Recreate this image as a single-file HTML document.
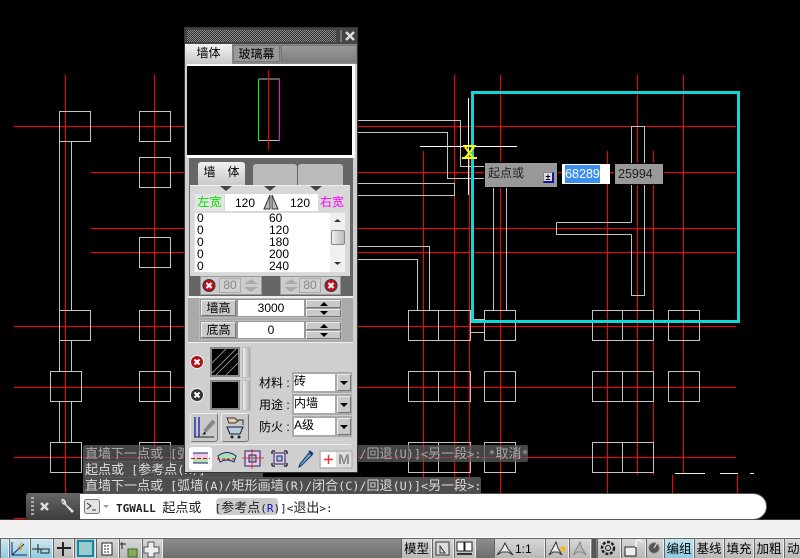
<!DOCTYPE html>
<html><head><meta charset="utf-8"><style>
*{box-sizing:border-box}
html,body{margin:0;padding:0;background:#000}
#r{position:relative;width:800px;height:558px;overflow:hidden;background:#000;font-family:"Liberation Sans","WenQuanYi Zen Hei",sans-serif;font-size:12px;color:#000}
#r div,#r span.a,#r svg.a{position:absolute}
.m{font-family:"DejaVu Sans Mono","WenQuanYi Zen Hei",monospace;font-size:11.800px;white-space:pre;line-height:16px}
.m i{font-style:normal;font-family:"WenQuanYi Zen Hei","Noto Sans CJK SC",sans-serif;font-size:13px}
.h{background:rgba(92,92,92,.85);color:#ddd;height:17px;padding-left:2px;border-radius:2px}
.t{white-space:pre;text-align:center}
.b{background:#c9c9c9;border:1px solid #eee;border-right-color:#777;border-bottom-color:#777}
.st{top:539px;height:19px;background:linear-gradient(#d8d8d8,#b8b8b8);border-left:1px solid #666;border-right:1px solid #eee;text-align:center;font-size:12.500px;line-height:20px}
</style></head><body><div id="r">

<svg class="a" style="left:0;top:0" width="800" height="558" shape-rendering="crispEdges" fill="none">
<path stroke="#f00" d="M14 126.500H736M91 172.500H736M91 228.500H736M91 252.500H736M14 326.500H736M14 387.500H736M14 457.500H736M14 518.500H26M65.500 75V519M154.500 75V519M423.500 151V519M454.500 75V519M469.500 151V519M500.500 75V519M607.500 151V519M637.500 75V475M653.500 151V475M683.500 75V473M672.500 475V493M737.500 475V493"/>
<path stroke="#c4c4c4" d="M59.500 111.500h31v30h-31zM139.500 111.500h31v30h-31zM139.500 157.500h31v30h-31zM139.500 237.500h31v30h-31zM59.500 310.500h31v30h-31zM139.500 310.500h31v30h-31zM50.500 371.500h31v30h-31zM139.500 371.500h31v30h-31zM50.500 442.500h31v30h-31zM139.500 442.500h31v30h-31z
M59.500 141V310M71.500 141V310M59.500 341V371M71.500 341V371M59.500 402V442M71.500 402V442
M408.500 310.500h62v30h-62zM438.500 310V341M484.500 310.500h31v30h-31zM408.500 371.500h62v30h-62zM438.500 371V402M484.500 371.500h31v30h-31zM408.500 442.500h62v30h-62zM438.500 442V473M484.500 442.500h31v30h-31z
M592.500 310.500h61v30h-61zM622.500 310V341M668.500 310.500h31v30h-31zM592.500 371.500h61v30h-61zM622.500 371V402M668.500 371.500h31v30h-31zM592.500 442.500h61v30h-61zM622.500 442V473
M355 120.500H460.500V166.500H485M355 132.500H447.500V178.500H485M355 183.500H454.500V195.500H355M355 246.500H429.500V310M355 259.500H417.500V310M493.500 187V310M506.500 187V310
M631.500 222.500V126.500H644.500V296M631.500 234.500V295.500H644.500M556.500 222.500H631.500M556.500 222.500V234.500H631.500M470 319.500H484M470 332.500H484"/>
<path stroke="#eee" d="M720 473.500h18M750 473.500h4M675 473.500h30"/>
<rect x="472.500" y="92.500" width="266" height="229" stroke="#12d6d6" stroke-width="3"/>
<path stroke="#fff" d="M468.500 98V195M420 146.500H517"/>
<path stroke="#ff0" stroke-width="2" d="M463 146h13M465 147l8 11M474 147l-9 11M462 158h15"/>
</svg>

<div style="left:485px;top:163px;width:72px;height:24px;background:#999;outline:1px solid #000"></div>
<div class="t" style="left:488px;top:165px;font-size:12px;color:#222;line-height:16px">起点或</div>
<div style="left:543px;top:172px;width:11px;height:11px;background:#ddd;border:1px solid #888;border-right:2px solid #11a;border-bottom:2px solid #11a;font-size:9px;font-weight:bold;line-height:8px;text-align:center">±</div>
<div style="left:562px;top:164px;width:48px;height:20px;background:#fff"></div>
<div style="left:565px;top:165px;width:35px;height:18px;background:#3b8ef0;color:#fff;font-size:12.500px;line-height:18px;text-align:center">68289</div>
<div style="left:615px;top:164px;width:48px;height:20px;background:#999;color:#222;font-size:12.500px;line-height:20px;padding-left:3px;outline:1px solid #000">25994</div>

<!-- Command history -->
<div class="m h" style="left:83px;top:445px;width:445px;color:#aaa;background:rgba(92,92,92,.75)"><i>直墙下一点或</i> [<i>弧墙</i>(A)/<i>矩形画墙</i>(R)/<i>闭合</i>(C)/<i>回退</i>(U)]&lt;<i>另一段</i>&gt;: *<i>取消</i>*</div>
<div class="m h" style="left:83px;top:461px;width:180px"><i>起点或</i> [<i>参考点</i>(R)]</div>
<div class="m h" style="left:83px;top:477px;width:398px"><i>直墙下一点或</i> [<i>弧墙</i>(A)/<i>矩形画墙</i>(R)/<i>闭合</i>(C)/<i>回退</i>(U)]&lt;<i>另一段</i>&gt;:</div>

<!-- Command line -->
<div style="left:0;top:519px;width:800px;height:1px;background:#333"></div>
<div style="left:26px;top:493px;width:741px;height:27px;background:#fff;border:1px solid #555;border-radius:3px 14px 14px 3px / 3px 13px 13px 3px"></div>
<div style="left:26px;top:493px;width:54px;height:27px;background:linear-gradient(#666,#3c3c3c);border-radius:3px 0 0 3px"></div>
<svg class="a" style="left:26px;top:493px" width="54" height="27">
<path d="M5 5h3M5 9h3M5 13h3M5 17h3M5 21h3" stroke="#aaa" stroke-width="2"/>
<path d="M15 10l7 7M22 10l-7 7" stroke="#ddd" stroke-width="2.500"/>
<path d="M36 6a4 4 0 0 0 3 6l7 8 2-2-8-7a4 4 0 0 0-5-5l3 3-1 1z" fill="#ddd"/>
</svg>
<svg class="a" style="left:84px;top:497px" width="26" height="20">
<rect x=".5" y="2.500" width="15" height="14" rx="2" fill="#e4e4e4" stroke="#777"/>
<path d="M3 6l4 3-4 3M8 13h4" stroke="#333" fill="none"/>
<path d="M19 8h6l-3 3z" fill="#999"/>
</svg>
<div style="left:216px;top:498px;width:62px;height:17px;background:#ccc;border-radius:4px"></div>
<div class="m" style="left:116px;top:498px;font-size:11px;font-weight:bold;color:#222;line-height:17px">TGWALL <i style="font-weight:normal">起点或</i> <span style="font-weight:normal"> [<i>参考点</i>(<span style="color:#11d">R</span>)]&lt;<i>退出</i>&gt;:</span></div>

<!-- Light band + status bar -->
<div style="left:0;top:520px;width:800px;height:18px;background:#f0f0f0"></div>
<div style="left:0;top:537px;width:800px;height:1px;background:#fff"></div>
<div style="left:0;top:538px;width:800px;height:20px;background:linear-gradient(#8e8e8e,#6e6e6e);border-top:1px solid #666"></div>
<div class="st" style="left:0;width:9px;background:linear-gradient(#d0e8f0,#8ccbe0)"></div>
<div class="st" style="left:9px;width:21px;background:linear-gradient(#d0e8f0,#8ccbe0)"></div>
<div class="st" style="left:30px;width:23px;background:linear-gradient(#d0e8f0,#8ccbe0)"></div>
<div class="st" style="left:53px;width:21px"></div>
<div class="st" style="left:74px;width:22px;background:#ccc"></div>
<div class="st" style="left:96px;width:23px"></div>
<div class="st" style="left:119px;width:23px"></div>
<div class="st" style="left:142px;width:21px"></div>
<div class="st" style="left:401px;width:31px">模型</div>
<div class="st" style="left:432px;width:22px"></div>
<div class="st" style="left:454px;width:22px"></div>
<div class="st" style="left:494px;width:51px;text-align:left;padding-left:20px;font-size:12px">1:1 ▼</div>
<div class="st" style="left:545px;width:24px"></div>
<div class="st" style="left:569px;width:22px"></div>
<div style="left:592px;top:539px;width:4px;height:19px;background:#555"></div>
<div class="st" style="left:597px;width:24px"></div>
<div class="st" style="left:621px;width:25px"></div>
<div class="st" style="left:646px;width:18px"></div>
<div class="st" style="left:664px;width:30px;background:linear-gradient(#c4e4f0,#8ccbe0)">编组</div>
<div class="st" style="left:694px;width:30px">基线</div>
<div class="st" style="left:724px;width:30px">填充</div>
<div class="st" style="left:754px;width:30px">加粗</div>
<div class="st" style="left:784px;width:30px;text-align:left;padding-left:2px">动态</div>
<svg class="a" style="left:0;top:539px" width="800" height="19" fill="none" stroke="#222">
<path d="M12 3V16H27M12 16L24 5" stroke="#226"/><path d="M22 3l-3 5h3l-2 4" stroke="#e90"/>
<path d="M32 10h13M38 5v9M41 10h8v4h-8z"/>
<path d="M57 9h14M63 3v14" stroke-width="2"/>
<rect x="78" y="2" width="15" height="15" fill="#9cc" stroke="#18a" stroke-width="2"/>
<rect x="102" y="4" width="10" height="12" fill="#fff"/><path d="M104 7h6M104 10h6M104 13h6" stroke-dasharray="2 1"/>
<path d="M122 3v7M120 5h6"/><rect x="128" y="10" width="9" height="8" fill="#8a5" stroke="#363"/>
<path d="M148 3h6v5h5v6h-5v4h-6v-4h-4V8h4z" fill="#eee" stroke="#555"/>
<path d="M436 3h13v13h-13zM440 7l5 7h-5z" stroke="#333" fill="#ddd"/>
<rect x="457" y="3" width="7" height="9" fill="#fff"/><rect x="465" y="3" width="7" height="9" fill="#fff"/><path d="M457 15h15" stroke-width="2" stroke="#333"/>
<path d="M505 4l-3 6-5 6 5-3h6l5 3-5-6z" fill="#eee" stroke="#333"/>
<path d="M556 3l-3 6-4 7 4-3h5l4 3-4-7z" fill="#eee" stroke="#333"/><circle cx="563" cy="10" r="2.500" fill="#fb0" stroke="none"/>
<path d="M580 3l-3 6-4 7 4-3h5l4 3-4-7z" fill="#bbb" stroke="#888"/>
<circle cx="608" cy="9" r="6" stroke-width="2.500" stroke-dasharray="3 1.500"/><circle cx="608" cy="9" r="2.500"/>
<rect x="625" y="8" width="11" height="9" fill="#eee"/><path d="M636 8V4a3 3 0 0 1 6 0" stroke="#eee" stroke-width="2"/>
<circle cx="654" cy="9" r="5.500" fill="#555" stroke="#aaa"/><path d="M654 9l3-5" stroke="#eee"/>
</svg>

<!-- Panel -->
<div style="left:184px;top:27px;width:174px;height:446px;background:#cfcfcf;border:1px solid #333"></div>
<div style="left:185px;top:28px;width:172px;height:16px;background:#444"></div>
<div style="left:187px;top:30px;width:149px;height:12px;background:repeating-conic-gradient(#8a8a8a 0 25%,#333 0 50%) 0 0/2px 2px"></div>
<div style="left:340px;top:30px;width:2px;height:12px;background:#777"></div>
<svg class="a" style="left:344px;top:30px" width="12" height="12"><path d="M2 2l8 8M10 2l-8 8" stroke="#ddd" stroke-width="2.500"/></svg>
<div style="left:185px;top:44px;width:172px;height:20px;background:#888"></div>
<div class="t" style="left:185px;top:44px;width:47px;height:20px;background:linear-gradient(#f4f4f4,#c8c8c8);line-height:19px;font-size:12px">墙体</div>
<div class="t" style="left:233px;top:45px;width:47px;height:17px;background:#999;line-height:16px;font-size:12px;border:1px solid #777">玻璃幕</div>
<div style="left:281px;top:45px;width:76px;height:17px;background:linear-gradient(#999,#808080);border:1px solid #777"></div>
<div style="left:187px;top:64px;width:168px;height:94px;background:#fff"></div>
<div style="left:187px;top:66px;width:165px;height:89px;background:#000"></div>
<svg class="a" style="left:187px;top:66px" width="165" height="89" shape-rendering="crispEdges" fill="none">
<path d="M71.500 13h21" stroke="#bbb"/><path d="M71.500 74.500h21" stroke="#bbb"/>
<path d="M71.500 13v62" stroke="#0f0"/><path d="M92.500 13v62" stroke="#f0f"/><path d="M81.500 4v80" stroke="#f00"/>
</svg>

<div style="left:189px;top:158px;width:164px;height:139px;background:#666"></div>
<div class="t" style="left:198px;top:162px;width:47px;height:24px;background:linear-gradient(#f0f0f0,#c8c8c8);border-radius:3px 3px 0 0;line-height:21px;font-size:12px">墙　体</div>
<div style="left:253px;top:164px;width:44px;height:22px;background:#bbb;border-radius:3px 3px 0 0"></div>
<div style="left:298px;top:164px;width:45px;height:22px;background:#bbb;border-radius:3px 3px 0 0"></div>
<div style="left:190px;top:185px;width:160px;height:91px;background:#d8d8d8;border-top:1px solid #eee"></div>
<svg class="a" style="left:190px;top:185px" width="160" height="9"><path d="M30 1h12l-6 5zM74 1h12l-6 5zM120 1h12l-6 5z" fill="#444"/></svg>
<div class="t" style="left:195px;top:194px;width:29px;height:17px;background:#e4e4e4;color:#0d0;font-size:12px;line-height:17px">左宽</div>
<div style="left:225px;top:194px;width:93px;height:17px;background:#fff"></div>
<div class="t" style="left:235px;top:196px;font-size:12px;line-height:14px">120</div>
<div class="t" style="left:290px;top:196px;font-size:12px;line-height:14px">120</div>
<svg class="a" style="left:263px;top:193px" width="16" height="18"><path d="M7 2L1 16h6zM9 2l6 14H9z" fill="#bbb" stroke="#333"/></svg>
<div class="t" style="left:319px;top:194px;width:26px;height:17px;color:#f0f;font-size:12px;line-height:17px">右宽</div>
<div style="left:194px;top:212px;width:152px;height:61px;background:#fff;border:1px solid #ddd"></div>
<div class="t" style="left:197px;top:212px;font-size:12px;line-height:12px;text-align:left">0
0
0
0
0</div>
<div class="t" style="left:269px;top:212px;font-size:12px;line-height:12px;text-align:left">60
120
180
200
240</div>
<div style="left:330px;top:213px;width:15px;height:59px;background:#f0f0f0"></div>
<div style="left:331px;top:230px;width:14px;height:15px;background:linear-gradient(90deg,#eee,#bbb);border:1px solid #888;border-radius:2px"></div>
<svg class="a" style="left:330px;top:213px" width="15" height="59"><path d="M4 9h7l-3.500-3zM4 49h7l-3.500 3z" fill="#333"/></svg>

<div style="left:200px;top:276px;width:62px;height:19px;background:#ccc;border:1px solid #999"></div>
<div style="left:280px;top:276px;width:61px;height:19px;background:#ccc;border:1px solid #999"></div>
<div class="t" style="left:219px;top:278px;width:22px;height:15px;background:#d0d0d0;border:1px solid #aaa;color:#888;line-height:13px">80</div>
<div class="t" style="left:299px;top:278px;width:22px;height:15px;background:#d0d0d0;border:1px solid #aaa;color:#888;line-height:13px">80</div>
<svg class="a" style="left:200px;top:276px" width="141" height="19">
<circle cx="9" cy="9.500" r="6" fill="#c01020" stroke="#333"/><path d="M6.500 7l5 5M11.500 7l-5 5" stroke="#fff" stroke-width="2"/>
<circle cx="131" cy="9.500" r="6" fill="#c01020" stroke="#333"/><path d="M128.500 7l5 5M133.500 7l-5 5" stroke="#fff" stroke-width="2"/>
<path d="M44 8h14l-7-5zM44 11h14l-7 5zM84 8h14l-7-5zM84 11h14l-7 5z" fill="#aaa"/>
</svg>

<div style="left:188px;top:296px;width:165px;height:2px;background:#eee"></div>
<div style="left:188px;top:298px;width:165px;height:44px;background:#aaa"></div>
<div style="left:199px;top:298px;width:143px;height:20px;background:#999;border:1px solid #bbb"></div>
<div style="left:199px;top:320px;width:143px;height:20px;background:#999;border:1px solid #bbb"></div>
<div class="t b" style="left:201px;top:300px;width:35px;height:16px;font-size:12px;line-height:15px">墙高</div>
<div class="t b" style="left:201px;top:322px;width:35px;height:16px;font-size:12px;line-height:15px">底高</div>
<div class="t" style="left:238px;top:300px;width:66px;height:16px;background:#fff;line-height:16px">3000</div>
<div class="t" style="left:238px;top:322px;width:66px;height:16px;background:#fff;line-height:16px">0</div>
<div class="b" style="left:306px;top:300px;width:35px;height:8px"></div>
<div class="b" style="left:306px;top:309px;width:35px;height:8px"></div>
<div class="b" style="left:306px;top:322px;width:35px;height:8px"></div>
<div class="b" style="left:306px;top:331px;width:35px;height:8px"></div>
<svg class="a" style="left:306px;top:300px" width="35" height="40"><path d="M14 6h8l-4-4zM14 11h8l-4 4zM14 28h8l-4-4zM14 33h8l-4 4z" fill="#000"/></svg>

<div style="left:188px;top:342px;width:165px;height:1px;background:#eee"></div>
<div style="left:210px;top:347px;width:30px;height:30px;background:#000;border:2px solid #888"></div>
<div style="left:210px;top:380px;width:30px;height:30px;background:#000;border:2px solid #888"></div>
<svg class="a" style="left:212px;top:349px" width="26" height="26"><path d="M0 14L14 0M4 26L26 4M14 26L26 14M0 24L24 0" stroke="#888"/></svg>
<div style="left:242px;top:347px;width:9px;height:31px;background:linear-gradient(90deg,#eee,#aaa);border:1px solid #bbb"></div>
<div style="left:242px;top:380px;width:9px;height:31px;background:linear-gradient(90deg,#eee,#aaa);border:1px solid #bbb"></div>
<svg class="a" style="left:188px;top:352px" width="20" height="52">
<circle cx="9" cy="10" r="6.500" fill="#b01018" stroke="#eee"/><path d="M6.500 7.500l5 5M11.500 7.500l-5 5" stroke="#fff" stroke-width="2"/>
<circle cx="9" cy="43" r="6.500" fill="#333" stroke="#eee"/><path d="M6.500 40.500l5 5M11.500 40.500l-5 5" stroke="#fff" stroke-width="2"/>
</svg>
<div class="t" style="left:259px;top:376px;font-size:12px;line-height:15px">材料 :</div>
<div class="t" style="left:259px;top:398px;font-size:12px;line-height:15px">用途 :</div>
<div class="t" style="left:259px;top:420px;font-size:12px;line-height:15px">防火 :</div>
<div style="left:292px;top:372px;width:60px;height:21px;background:#aaa"></div>
<div style="left:292px;top:394px;width:60px;height:21px;background:#aaa"></div>
<div style="left:292px;top:416px;width:60px;height:21px;background:#aaa"></div>
<div class="t" style="left:294px;top:374px;width:41px;height:17px;background:#fff;text-align:left;font-size:12px;line-height:15px">砖</div>
<div class="t" style="left:294px;top:396px;width:41px;height:17px;background:#fff;text-align:left;font-size:12px;line-height:15px">内墙</div>
<div class="t" style="left:294px;top:418px;width:41px;height:17px;background:#fff;text-align:left;font-size:12px;line-height:15px">A级</div>
<div class="b" style="left:337px;top:374px;width:14px;height:17px"></div>
<div class="b" style="left:337px;top:396px;width:14px;height:17px"></div>
<div class="b" style="left:337px;top:418px;width:14px;height:17px"></div>
<svg class="a" style="left:337px;top:374px" width="14" height="61"><path d="M3 7h8l-4 4zM3 29h8l-4 4zM3 51h8l-4 4z" fill="#000"/></svg>

<div class="b" style="left:190px;top:413px;width:28px;height:29px;border-radius:3px"></div>
<div class="b" style="left:221px;top:413px;width:28px;height:29px;border-radius:3px"></div>
<svg class="a" style="left:190px;top:413px" width="60" height="29" fill="none">
<path d="M5 4v20M9 4v20" stroke="#23a" stroke-width="1.500"/><path d="M4 24h20" stroke="#222"/>
<path d="M24 8l-9 10" stroke="#888" stroke-width="4"/><path d="M15 18l-3 4 4-1z" fill="#222"/>
<path d="M37 5h8l3 3-3 2h-6z" fill="#e8c8a8" stroke="#333"/><path d="M48 7h5v5" stroke="#333"/>
<path d="M37 14h16l-3 7H40z" fill="#bcd" stroke="#123"/><circle cx="42" cy="24" r="1.500" fill="#222"/><circle cx="49" cy="24" r="1.500" fill="#222"/>
</svg>
<div style="left:190px;top:444px;width:161px;height:1px;background:#eee"></div>
<div style="left:189px;top:447px;width:23px;height:23px;background:#fff;border-radius:3px"></div>
<svg class="a" style="left:189px;top:447px" width="165" height="24" fill="none">
<rect x="4" y="6" width="15" height="5" fill="#ecc8ec"/><rect x="4" y="11" width="15" height="5" fill="#a8e4b8"/>
<path d="M4 6h15M4 16h15" stroke="#226"/><path d="M2 11.500h19" stroke="#e00" stroke-dasharray="4 2"/>
<path d="M29 9q9-7 18 0l-2 6q-7-4-14 0z" fill="#a8e4b8" stroke="#226"/><path d="M28 12h20" stroke="#e00" stroke-dasharray="3 2"/>
<rect x="56" y="4" width="15" height="15" fill="#eccce4" stroke="#226"/><rect x="60" y="8" width="7" height="7" fill="#9cd" stroke="#226"/><path d="M53 11h22M63 2v20" stroke="#e00" opacity=".7"/>
<path d="M83 4h3M83 4v3M98 4h-3M98 4v3M83 19h3M83 19v-3M98 19h-3M98 19v-3" stroke="#333" stroke-width="1.500"/><rect x="85" y="6" width="11" height="11" fill="#eccce4" stroke="#226"/><rect x="88" y="9" width="5" height="5" fill="#9cd" stroke="#226"/>
<path d="M112 19l-2 1 1-3 9-11 3 2z" fill="#7ab" stroke="#137"/><path d="M120 4l4 3" stroke="#137" stroke-width="2"/>
<rect x="131" y="4" width="32" height="17" fill="#ddd" stroke="#aaa"/><rect x="132" y="5" width="15" height="15" fill="#fff"/>
<path d="M135 12.500h9M139.500 8v9" stroke="#e33" stroke-width="1.500"/>
</svg>
<div class="t" style="left:337px;top:452px;width:14px;font-size:14px;font-weight:bold;color:#888;line-height:15px">M</div>
</div></body></html>
